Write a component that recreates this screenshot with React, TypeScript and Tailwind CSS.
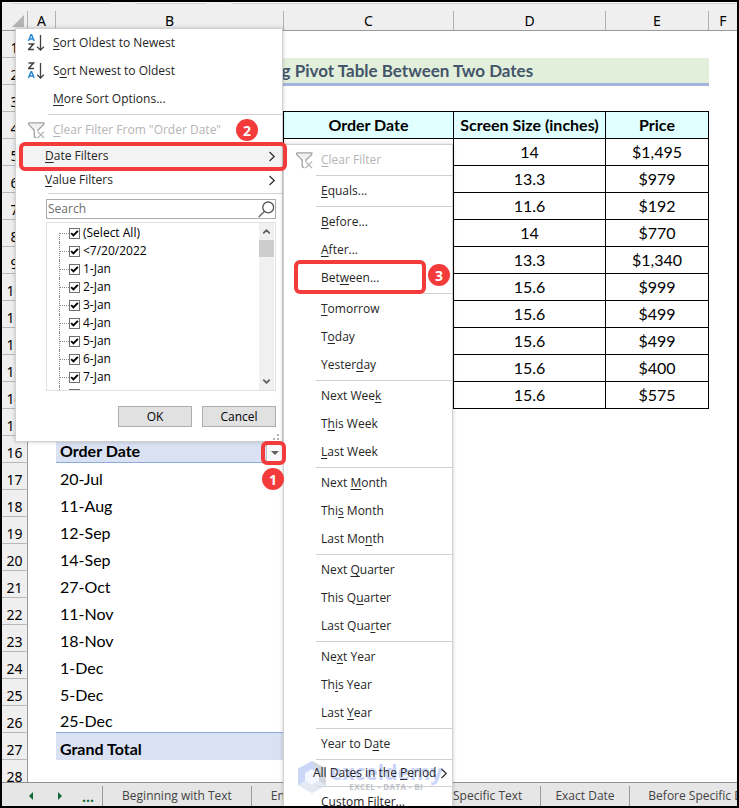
import React from "react";
import { ChevronDown, ChevronRight, ChevronUp } from "lucide-react";

type MenuEntry = { label: string; tight?: boolean; disabled?: boolean; arrow?: boolean };

// "&" stands before the access key, which is drawn underlined
const DATE_MENU: MenuEntry[][] = [
  [{ label: "&Clear Filter", disabled: true }],
  [{ label: "&Equals..." }],
  [{ label: "&Before..." }, { label: "&After..." }, { label: "Bet&ween..." }],
  [{ label: "&Tomorrow" }, { label: "T&oday" }, { label: "Yester&day" }],
  [{ label: "Next Wee&k" }, { label: "T&his Week" }, { label: "&Last Week" }],
  [{ label: "Next &Month" }, { label: "Thi&s Month" }, { label: "Last Mo&nth" }],
  [{ label: "Next &Quarter" }, { label: "This Q&uarter" }, { label: "Last Qua&rter" }],
  [{ label: "Ne&xt Year" }, { label: "Th&is Year" }, { label: "Last &Year" }],
  [{ label: "Year to D&ate" }],
  [{ label: "All Dates in the &Period", tight: true, arrow: true }],
  [{ label: "Custom &Filter..." }],
];

const PRODUCTS = [
  ["14", "$1,495"],
  ["13.3", "$979"],
  ["11.6", "$192"],
  ["14", "$770"],
  ["13.3", "$1,340"],
  ["15.6", "$999"],
  ["15.6", "$499"],
  ["15.6", "$499"],
  ["15.6", "$400"],
  ["15.6", "$575"],
];

const PIVOT_DATES = ["20-Jul", "11-Aug", "12-Sep", "14-Sep", "27-Oct", "11-Nov", "18-Nov", "1-Dec", "5-Dec", "25-Dec"];

const FILTER_VALUES = ["(Select All)", "<7/20/2022", "1-Jan", "2-Jan", "3-Jan", "4-Jan", "5-Jan", "6-Jan", "7-Jan"];

const TABS = [
  { name: "Beginning with Text", width: "w-[149px]" },
  { name: "Ending with Text", width: "w-[131px]" },
  { name: "Contains Specific Text", width: "w-[158px]" },
  { name: "Exact Date", width: "w-[89px]" },
  { name: "Before Specific Date", width: "w-[150px]" },
];

function AccessLabel({ text }: { text: string }) {
  const i = text.indexOf("&");
  if (i < 0) return <span>{text}</span>;
  return (
    <span className="whitespace-nowrap">
      {text.slice(0, i)}
      <span className="underline underline-offset-2">{text[i + 1]}</span>
      {text.slice(i + 2)}
    </span>
  );
}

function SortIcon({ descending }: { descending?: boolean }) {
  const top = descending ? "#404040" : "#2b88d0";
  const bottom = descending ? "#2b88d0" : "#404040";
  const a = "M0.4 7 L3 0.8 H3.6 L6.2 7 M1.4 4.9 H5.2";
  const z = "M0.5 1 H5.5 L0.5 6.6 H5.9";
  return (
    <svg width="17" height="18" viewBox="0 0 17 18" fill="none" strokeWidth="1.5" aria-hidden="true">
      <path d={descending ? z : a} stroke={top} />
      <path d={descending ? a : z} stroke={bottom} transform="translate(0 9)" />
      <path d="M12.5 1 V16 M9.2 12.8 L12.5 16.1 L15.8 12.8" stroke="#404040" strokeWidth="1.3" />
    </svg>
  );
}

function ClearFilterIcon() {
  return (
    <svg width="17" height="17" viewBox="0 0 17 17" fill="none" stroke="#a3a3a3" strokeWidth="1.3" aria-hidden="true">
      <path d="M0.7 0.8 H15.8 V2.4 L10 8 V9.2 M0.7 0.8 V2.4 L6.2 8 V14.6 L8.4 16" fill="#f0f0f0" />
      <path d="M9.6 9.6 L16 16 M16 9.6 L9.6 16" stroke="#b5b5b5" />
    </svg>
  );
}

function Arrow() {
  return (
    <svg width="8" height="11" viewBox="0 0 8 11" fill="none" stroke="#333" strokeWidth="1.3" aria-hidden="true">
      <path d="M1.5 1 L6.2 5.5 L1.5 10" />
    </svg>
  );
}

function Separator() {
  return <div className="my-px ml-8 h-px bg-[#d0d0d0]" />;
}

function Badge({ children }: { children: React.ReactNode }) {
  return (
    <span className="flex size-[22px] items-center justify-center rounded-full bg-[#f43b3b] font-['Noto_Sans',sans-serif] text-[14px] font-bold text-white">
      {children}
    </span>
  );
}

function FilterPanel() {
  return (
    <section
      aria-label="Filter"
      className="absolute top-[26px] left-[13px] z-10 w-[268px] border border-[#d0d0d0] bg-white text-[#262626] shadow-[0_0_4px_rgba(0,0,0,0.2)]"
    >
      <button className="flex h-7 w-full items-center gap-2 pl-3">
        <SortIcon />
        <AccessLabel text="&Sort Oldest to Newest" />
      </button>
      <button className="flex h-7 w-full items-center gap-2 pl-3">
        <SortIcon descending />
        <AccessLabel text="S&ort Newest to Oldest" />
      </button>
      <button className="flex h-7 w-full items-center pl-[37px]">
        <AccessLabel text="&More Sort Options..." />
      </button>
      <Separator />
      <button disabled className="flex h-7 w-full items-center gap-2 pl-3 text-[#b5b5b5]">
        <ClearFilterIcon />
        <AccessLabel text={'&Clear Filter From "Order Date"'} />
      </button>
      <button className="flex h-6 w-full items-center justify-between bg-[#f3f3f3] pr-[6px] pl-[29px]">
        <AccessLabel text="&Date Filters" />
        <Arrow />
      </button>
      <button className="flex h-6 w-full items-center justify-between pr-[6px] pl-[29px]">
        <AccessLabel text="&Value Filters" />
        <Arrow />
      </button>
      <Separator />

      <div className="mt-[5px] mr-[6px] ml-[30px]">
        <label className="flex h-5 items-center border border-[#ababab] bg-white pl-px">
          <input aria-label="Search" placeholder="Search" className="min-w-0 flex-1 outline-none placeholder:text-[#6d6d6d]" />
          <svg width="17" height="17" viewBox="0 0 17 17" fill="none" stroke="#555" strokeWidth="1.3" aria-hidden="true">
            <circle cx="10.2" cy="6.4" r="5.4" />
            <path d="M6.4 10.4 L0.8 16" />
          </svg>
        </label>

        <div className="mt-[3px] flex h-[169px] border border-[#dfe1e5]">
          <ul className="flex-1 overflow-hidden pt-px pl-3">
            {FILTER_VALUES.map((value, i) => (
              <li key={value} className="flex h-[18px] items-center">
                <span className={`border-l border-dotted border-[#8a8a8a] ${i === 0 ? "h-[9px] self-end" : "h-full"}`} />
                <span className="w-[9px] border-t border-dotted border-[#8a8a8a]" />
                <label className="flex items-center gap-[3px] text-black">
                  <span className="grid size-[11px] place-items-center">
                    <input
                      type="checkbox"
                      defaultChecked
                      className="peer col-start-1 row-start-1 size-[11px] appearance-none border border-[#707070] bg-white"
                    />
                    <svg
                      className="pointer-events-none invisible col-start-1 row-start-1 peer-checked:visible"
                      width="9"
                      height="9"
                      viewBox="0 0 9 9"
                      fill="none"
                      stroke="black"
                      strokeWidth="1.9"
                      aria-hidden="true"
                    >
                      <path d="M1.2 4.2 L3.4 6.5 L7.9 1.8" />
                    </svg>
                  </span>
                  {value}
                </label>
              </li>
            ))}
            {/* top edge of the next row */}
            <li className="flex h-[18px]">
              <span className="border-l border-dotted border-[#8a8a8a]" />
              <span className="mt-[3px] ml-[9px] h-[11px] w-[11px] border border-[#707070]" />
            </li>
          </ul>
          <div className="mr-px flex w-[15px] flex-col items-center bg-[#f0f0f0]">
            <span className="flex h-[17px] items-center">
              <ChevronUp size={11} strokeWidth={4} color="#606060" />
            </span>
            <span className="h-[17px] w-full bg-[#cdcdcd]" />
            <span className="mt-auto flex h-[17px] items-center">
              <ChevronDown size={11} strokeWidth={4} color="#606060" />
            </span>
          </div>
        </div>

        <div className="mt-[15px] flex justify-end gap-[10px]">
          <button className="h-[21px] w-[74px] border border-[#adadad] bg-[#e1e1e1] text-black">OK</button>
          <button className="h-[21px] w-[74px] border border-[#adadad] bg-[#e1e1e1] text-black">Cancel</button>
        </div>
      </div>
      <svg className="mt-[7px] ml-auto" width="9" height="7" viewBox="0 0 9 7" fill="#b0b0b0" aria-hidden="true">
        <path d="M4 0h2v2h-2z M0 4h2v2h-2z M4 4h2v2h-2z" />
      </svg>
    </section>
  );
}

function Watermark() {
  return (
    <div className="pointer-events-none absolute top-[616px] left-[14px] flex items-start gap-1 opacity-60">
      <svg width="28" height="32" viewBox="0 0 28 32" aria-hidden="true">
        <path d="M14 0 L28 7.5 V24 L14 32 L0 24 V7.5 Z" fill="#a9bdf3" />
        <path d="M14 0 L28 7.5 V24 L20 19 V11 Z" fill="#b7bec6" />
        <path d="M0 24 L7 20 L14 24 L21 20 L28 24 L14 32 Z" fill="#d5dcea" />
        <path d="M7 12 L14 8 L21 12 V20 L14 24 L7 20 Z" fill="#edf2ff" />
      </svg>
      <div className="flex flex-col items-center font-['Open_Sans',sans-serif]">
        <span className="text-[21px] leading-[22px] font-bold text-[#a6b8f4]">exceldemy</span>
        <span className="text-[8px] leading-[8px] font-bold tracking-wider text-[#9a9fa8]">EXCEL - DATA - BI</span>
      </div>
    </div>
  );
}

function DateFilterMenu() {
  return (
    <section
      aria-label="Date Filters"
      className="absolute top-[142px] left-[281px] z-20 w-[170px] border border-[#d0d0d0] bg-white pt-px text-[#262626] shadow-[0_0_4px_rgba(0,0,0,0.2)]"
    >
      <Watermark />
      {DATE_MENU.map((group, g) => (
        <React.Fragment key={group[0].label}>
          {g > 0 && <Separator />}
          {group.map((item) => (
            <button
              key={item.label}
              disabled={item.disabled}
              className={`relative flex w-full items-center ${item.tight ? "h-6 gap-1 pl-[29px]" : "h-7"} ${
                item.disabled ? "gap-2 pl-3 text-[#b5b5b5]" : item.tight ? "" : "pl-[37px]"
              }`}
            >
              {item.disabled && <ClearFilterIcon />}
              <AccessLabel text={item.label} />
              {item.arrow && <Arrow />}
            </button>
          ))}
        </React.Fragment>
      ))}
    </section>
  );
}

function ProductCells({ row }: { row: number }) {
  if (row === 4) {
    return (
      <>
        {["Order Date", "Screen Size (inches)", "Price"].map((h) => (
          <th key={h} scope="col" className="border-r border-b border-black bg-[#e0ffff] p-0 text-center font-bold whitespace-nowrap">
            {h}
          </th>
        ))}
      </>
    );
  }
  const product = PRODUCTS[row - 5];
  if (row > 4 && product) {
    return (
      <>
        <td className="border-r border-b border-black" />
        {product.map((v, i) => (
          <td key={i} className="border-r border-b border-black p-0 text-center">{v}</td>
        ))}
      </>
    );
  }
  return <td colSpan={3} />;
}

function PivotCell({ row }: { row: number }) {
  if (row === 16) {
    return (
      <td className="border-b border-[#8ea9db] bg-[#d9e1f2] p-0 pl-1 align-bottom">
        <div className="flex items-end justify-between pr-px">
          <span className="font-bold">Order Date</span>
          <button aria-label="Filter Order Date" className="flex h-[18px] w-[17px] items-center justify-center border border-[#c4c4c4] bg-[#f8f9fb]">
            <span className="border-x-4 border-t-4 border-x-transparent border-t-[#606060]" />
          </button>
        </div>
      </td>
    );
  }
  if (row === 27) return <td className="bg-[#d9e1f2] p-0 pl-1 align-bottom font-bold">Grand Total</td>;
  const date = PIVOT_DATES[row - 17];
  if (date) {
    return <td className={`p-0 pl-1 align-bottom ${row === 26 ? "border-b border-[#8ea9db]" : ""}`}>{date}</td>;
  }
  return <td className={row > 3 && row < 15 ? "border-r border-black" : ""} />;
}

function Sheet() {
  return (
    <table className="w-full table-fixed border-separate border-spacing-0 font-['Lato',sans-serif] text-[16px] leading-[22px] text-black">
      <colgroup>
        <col className="w-[26px]" />
        <col className="w-[28px]" />
        <col className="w-[228px]" />
        <col className="w-[170px]" />
        <col className="w-[152px]" />
        <col className="w-[103px]" />
        <col />
      </colgroup>
      <thead>
        <tr className="h-[27px] bg-[#efefef] font-['Noto_Sans',sans-serif] text-[14px]">
          <th aria-label="Select all" className="border-b border-[#999] p-0 pt-[7px]">
            <div className="flex h-[19px] items-center justify-end border-r border-[#b0b0b0] pr-[3px]">
              <svg width="12" height="12" viewBox="0 0 12 12" aria-hidden="true">
                <path d="M12 0 V12 H0 Z" fill="#b4b4b4" />
              </svg>
            </div>
          </th>
          {["A", "B", "C", "D", "E"].map((c) => (
            <th key={c} scope="col" className="border-b border-[#999] p-0 pt-[7px] font-normal">
              <div className="border-r border-[#b0b0b0] leading-[19px]">{c}</div>
            </th>
          ))}
          <th scope="col" className="border-b border-[#999] p-0 pt-[7px] font-normal">
            <div className="leading-[19px]">F</div>
          </th>
        </tr>
      </thead>
      <tbody>
        {Array.from({ length: 28 }, (_, i) => i + 1).map((row) => (
          <tr key={row} className="h-[27px]">
            <th
              scope="row"
              className="border-r border-b border-r-[#999] border-b-[#b8b8b8] bg-[#efefef] p-0 align-bottom font-['Noto_Sans',sans-serif] text-[14px] leading-[18px] font-normal"
            >
              {row}
            </th>
            <td />
            {row === 2 && (
              <td colSpan={4} className="border-b-2 border-[#a4b4df] bg-[#e2efda] p-0 pr-1 text-center text-[17px] font-bold text-[#44546a]">
                Filtering Pivot Table Between Two Dates
              </td>
            )}
            {row === 3 && <td colSpan={4} className="border-t border-b border-t-[#a4b4df] border-b-black" />}
            {row !== 2 && row !== 3 && (
              <>
                <PivotCell row={row} />
                <ProductCells row={row} />
              </>
            )}
            <td />
          </tr>
        ))}
      </tbody>
    </table>
  );
}

function TabBar() {
  return (
    <nav
      aria-label="Sheets"
      className="flex h-[24px] shrink-0 items-stretch overflow-hidden border-t border-[#8f8f8f] bg-[#e6e6e6] pt-[3px] text-[12px] text-[#444]"
    >
      <div className="flex w-[100px] shrink-0 items-center">
        <button aria-label="Previous sheet" className="ml-[27px] border-y-4 border-r-4 border-y-transparent border-r-[#0e6b39]" />
        <button aria-label="Next sheet" className="ml-[25px] border-y-4 border-l-4 border-y-transparent border-l-[#0e6b39]" />
        <button className="ml-5 text-[14px] font-bold text-[#0e6b39]">...</button>
      </div>
      {TABS.map((tab) => (
        <button key={tab.name} className={`shrink-0 border-l border-[#9a9a9a] whitespace-nowrap ${tab.width}`}>
          {tab.name}
        </button>
      ))}
    </nav>
  );
}

export default function App() {
  return (
    <main className="relative flex h-screen flex-col overflow-hidden border-2 border-black bg-white font-['Open_Sans','Noto_Sans',sans-serif] text-[12px]">
      <div className="flex h-[2px] shrink-0 gap-6 bg-[#efefef] pl-[9px]">
        <span className="w-[100px] rounded-b-sm border-b border-[#d0d0d0] bg-white" />
        <span className="w-[72px] rounded-b-sm border-b border-[#d0d0d0] bg-white" />
        <span className="flex-1 rounded-bl-sm border-b border-[#d0d0d0] bg-white" />
      </div>
      <div className="min-h-0 flex-1 overflow-hidden">
        <Sheet />
      </div>
      <TabBar />

      <FilterPanel />
      <DateFilterMenu />

      {/* step markers */}
      <div className="pointer-events-none absolute top-[140px] left-[17px] z-30 h-[29px] w-[268px] rounded-md border-4 border-[#f43b3b]" />
      <div className="pointer-events-none absolute top-[258px] left-[292px] z-30 h-[34px] w-[132px] rounded-md border-4 border-[#f43b3b]" />
      <div className="pointer-events-none absolute top-[439px] left-[259px] z-30 h-[24px] w-[25px] rounded-md border-4 border-[#f43b3b]" />
      <div className="absolute top-[117px] left-[234px] z-30">
        <Badge>2</Badge>
      </div>
      <div className="absolute top-[262px] left-[426px] z-30">
        <Badge>3</Badge>
      </div>
      <div className="absolute top-[466px] left-[260px] z-30">
        <Badge>1</Badge>
      </div>
    </main>
  );
}
